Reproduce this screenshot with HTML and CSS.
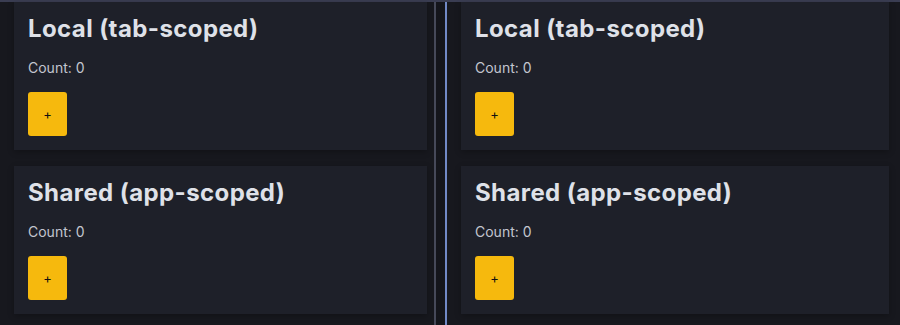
FILE: index.html
```html
<!DOCTYPE html>
<html lang="en">
<head>
  <meta charset="UTF-8">
  <meta name="viewport" content="width=device-width, initial-scale=1.0">
  <title>Local vs Shared Counters</title>
  <link rel="stylesheet" href="styles.css">
</head>
<body>
  <div class="split">
    <!-- Left tab -->
    <div class="pane pane-left">
      <div class="card">
        <h2>Local (tab-scoped)</h2>
        <p class="count">Count: 0</p>
        <button class="inc">+</button>
      </div>
      <div class="card">
        <h2>Shared (app-scoped)</h2>
        <p class="count">Count: 0</p>
        <button class="inc">+</button>
      </div>
    </div>

    <div class="divider"></div>

    <!-- Right tab -->
    <div class="pane pane-right">
      <div class="card">
        <h2>Local (tab-scoped)</h2>
        <p class="count">Count: 0</p>
        <button class="inc">+</button>
      </div>
      <div class="card">
        <h2>Shared (app-scoped)</h2>
        <p class="count">Count: 0</p>
        <button class="inc">+</button>
      </div>
    </div>
  </div>
</body>
</html>
```

FILE: styles.css
```css
:root {
  --bg-color: #17181e;
  --card-bg: #1e2029;
  --title-color: #dfe1e8;
  --text-color: #c3c6cf;
  --button-bg: #f6b90d;
}

html, body {
  height: 100%;
}

body {
  margin: 0;
  font-family: Inter, "Noto Sans", sans-serif;
  background-color: var(--bg-color);
  color: var(--text-color);
  overflow: hidden;
}

.split {
  display: flex;
  height: 100%;
  border-top: 2px solid #3a3d52;
  box-sizing: border-box;
}

.pane {
  display: flex;
  flex-direction: column;
  gap: 16px;
}

.pane-left {
  width: 434px;
  padding: 0 7px 0 14px;
  box-sizing: border-box;
}

.pane-right {
  flex: 1;
  padding: 0 11px 0 14px;
}

.divider {
  width: 9px;
  background: #14151b;
  border-left: 2px solid #464959;
  border-right: 2px solid #7189c6;
}

.card {
  background: var(--card-bg);
  padding: 12px 14px 14px;
  box-shadow: 0 2px 6px rgba(0, 0, 0, 0.25);
}

.card h2 {
  margin: 0;
  font-size: 24px;
  line-height: 29px;
  font-weight: 700;
  letter-spacing: 0.4px;
  color: var(--title-color);
}

.count {
  margin: 16px 0;
  font-size: 14px;
  line-height: 17px;
}

.inc {
  display: block;
  width: 39px;
  height: 44px;
  padding: 0;
  border: none;
  border-radius: 3px;
  background-color: var(--button-bg);
  color: #111;
  font-family: inherit;
  font-size: 13px;
  cursor: pointer;
}

.inc:hover {
  opacity: 0.9;
}
```
